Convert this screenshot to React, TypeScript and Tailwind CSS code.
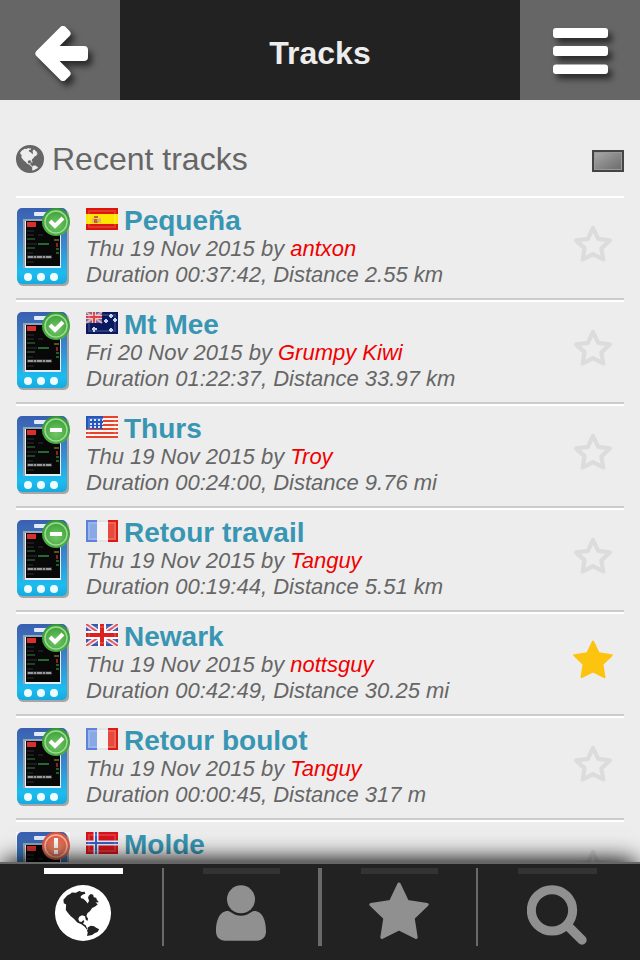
import React from 'react';

type Status = 'done' | 'minus' | 'alert';
type Country = 'es' | 'au' | 'us' | 'fr' | 'gb' | 'no';

interface Track {
  name: string;
  country: Country;
  date: string;
  author: string;
  duration: string;
  distance: string;
  status: Status;
  starred?: boolean;
}

const tracks: Track[] = [
  { name: 'Pequeña', country: 'es', date: 'Thu 19 Nov 2015', author: 'antxon', duration: '00:37:42', distance: '2.55 km', status: 'done' },
  { name: 'Mt Mee', country: 'au', date: 'Fri 20 Nov 2015', author: 'Grumpy Kiwi', duration: '01:22:37', distance: '33.97 km', status: 'done' },
  { name: 'Thurs', country: 'us', date: 'Thu 19 Nov 2015', author: 'Troy', duration: '00:24:00', distance: '9.76 mi', status: 'minus' },
  { name: 'Retour travail', country: 'fr', date: 'Thu 19 Nov 2015', author: 'Tanguy', duration: '00:19:44', distance: '5.51 km', status: 'minus' },
  { name: 'Newark', country: 'gb', date: 'Thu 19 Nov 2015', author: 'nottsguy', duration: '00:42:49', distance: '30.25 mi', status: 'done', starred: true },
  { name: 'Retour boulot', country: 'fr', date: 'Thu 19 Nov 2015', author: 'Tanguy', duration: '00:00:45', distance: '317 m', status: 'done' },
  { name: 'Molde', country: 'no', date: '', author: '', duration: '', distance: '', status: 'alert' },
];

function Globe({ className }: { className: string }) {
  return (
    <svg viewBox="0 0 166 166" className={className} fill="currentColor" fillRule="evenodd" aria-hidden="true">
      <path d="M83 0a83 83 0 1 0 0 166a83 83 0 1 0 0-166zM25 44L36 31 46 26 50 22 62 23 72 18 80 21 88 20 90 26 83 28 76 33 77 39 84 41 92 48 97 55 101 47 98 38 100 32 106 27 113 29 115 36 122 38 124 44 130 51 120 52 127 57 119 64 110 68 104 77 96 84 93 92 98 100 96 107 91 102 89 93 80 90 72 94 69 101 72 108 79 110 84 104 87 108 83 115 91 119 94 127 98 128 96 134 88 124 78 116 66 111 56 100 46 92 38 82 32 74 33 58 26 54zM98 125L106 121 116 122 122 127 131 131 126 139 117 143 110 148 95 151 97 141 94 133z" />
    </svg>
  );
}

function Star({ className, filled = true }: { className: string; filled?: boolean }) {
  return (
    <svg viewBox="0 0 180 172" className={className} aria-hidden="true">
      {filled ? (
        <path d="M90 6L115 58 174 67 132 107 141 165 90 139 39 165 48 107 6 67 65 58z" fill="currentColor" stroke="currentColor" strokeWidth="10" strokeLinejoin="round" />
      ) : (
        <path d="M90 16L113 65 166 72 128 108 136 158 90 134 44 158 52 108 14 72 67 65z" fill="none" stroke="currentColor" strokeWidth="19" strokeLinejoin="round" />
      )}
    </svg>
  );
}

function Flag({ country }: { country: Country }) {
  return (
    <svg viewBox="0 0 32 22" className="h-[22px] w-8 shrink-0" role="img" aria-label={country}>
      {country === 'es' && (
        <>
          <rect width="32" height="22" fill="#dd1508" />
          <rect y="6" width="32" height="10" fill="#ffe400" />
          <path d="M6 10h2v5H6zM13 10h2v5h-2z" fill="#e5b46a" />
          <path d="M8 8h4v2H8zM8 11h4v4H8z" fill="#cf5a3a" />
          <path d="M11 11h2v3h-2z" fill="#b3a9b0" />
        </>
      )}
      {country === 'au' && (
        <>
          <rect width="32" height="22" fill="#0a1860" />
          <path d="M0 0h16v11H0z" fill="#6a6aa8" />
          <path d="M0 0L16 11M16 0L0 11" stroke="#e8a5a5" strokeWidth="2" />
          <path d="M8 0v11M0 5h16" stroke="#f0c5c5" strokeWidth="4" />
          <path d="M8 0v11M0 5h16" stroke="#d84343" strokeWidth="2" />
          <path d="M6 17h5M8 15v5M23 4h4M25 2v4M18 9h4M20 7v4M27 8h4M29 6v4M23 18h4M25 16v4" stroke="#c2d0ee" strokeWidth="2" />
        </>
      )}
      {country === 'us' && (
        <>
          <rect width="32" height="22" fill="#fff4ee" />
          <path d="M0 1h32M0 5h32M0 9h32M0 13h32M0 17h32M0 21h32" stroke="#e5432e" strokeWidth="2" />
          <rect width="17" height="13" fill="#2457bd" />
          <path d="M4 4h13M4 8h13M4 11h13" stroke="#d5e4fc" strokeWidth="2" strokeDasharray="2 2" />
        </>
      )}
      {country === 'fr' && (
        <>
          <rect width="32" height="22" fill="#e4e4e6" />
          <rect x="11" y="2" width="11" height="18" fill="#f3f3f3" />
          <rect width="11" height="22" fill="#5b83d8" />
          <rect x="2" y="2" width="9" height="18" fill="#88a8e6" />
          <rect x="22" width="10" height="22" fill="#dd1a12" />
          <rect x="22" y="2" width="8" height="18" fill="#e8493f" />
        </>
      )}
      {country === 'gb' && (
        <>
          <rect width="32" height="22" fill="#3a56ae" />
          <path d="M0 0L32 22M32 0L0 22" stroke="#f5eef2" strokeWidth="5" />
          <path d="M0 0L32 22M32 0L0 22" stroke="#e2525a" strokeWidth="2" />
          <path d="M16 0v22M0 11h32" stroke="#fff" strokeWidth="8" />
          <path d="M16 0v22M0 11h32" stroke="#dc2020" strokeWidth="4" />
        </>
      )}
      {country === 'no' && (
        <>
          <rect width="32" height="22" fill="#d8141a" />
          <path d="M10 0v22M0 11h32" stroke="#e6edfb" strokeWidth="5" />
          <path d="M10 0v22M0 11h32" stroke="#3761c4" strokeWidth="2" />
        </>
      )}
      <rect x="3" y="3" width="26" height="16" fill="none" stroke="#fff" strokeOpacity="0.15" strokeWidth="2" />
    </svg>
  );
}

function Phone({ status }: { status: Status }) {
  const alert = status === 'alert';
  return (
    <svg viewBox="0 0 54 78" className="h-[78px] w-[54px] shrink-0" role="img" aria-label={status}>
      <defs>
        <linearGradient id={'body-' + status} x1="0" y1="0" x2="0" y2="1">
          <stop offset="0" stopColor="#3a5fb0" />
          <stop offset="0.45" stopColor="#3a86cc" />
          <stop offset="0.85" stopColor="#1cbcf0" />
          <stop offset="1" stopColor="#16aae0" />
        </linearGradient>
        <radialGradient id={'badge-' + status} cx="0.5" cy="0.6" r="0.6">
          <stop offset="0" stopColor={alert ? '#f0906f' : '#74c86a'} />
          <stop offset="1" stopColor={alert ? '#dc4f3d' : '#319a2d'} />
        </radialGradient>
      </defs>
      {alert && <rect width="54" height="78" fill="#f8f8f8" />}
      <rect x="2" y="2" width="51" height="76" rx="5" fill="#777" fillOpacity="0.6" />
      <rect x="1" y="0" width="50" height="76" rx="5" fill={'url(#body-' + status + ')'} />
      <rect x="18" y="4" width="17" height="4" rx="1" fill="#dfeafa" />
      <rect x="7" y="11" width="38" height="49" fill="#9aa4b0" />
      <rect x="9" y="13" width="36" height="47" fill="#e4ecf4" />
      <rect x="10" y="13" width="34" height="45" fill="#080808" />
      <rect x="11" y="14" width="9" height="5" fill="#d83030" />
      <path d="M11 23h7M11 27h7M22 27h5M11 36h10M11 45h6" stroke="#303038" strokeWidth="1" />
      <path d="M11 31h8M11 40h8" stroke="#1d4423" strokeWidth="2" />
      <path d="M22 36h11" stroke="#266a33" strokeWidth="2" />
      <path d="M11 49h25" stroke="#444" strokeWidth="3" />
      <path d="M12 49h23" stroke="#999" strokeWidth="2" strokeDasharray="5 1 2 1" />
      <path d="M11 54h7" stroke="#303030" strokeWidth="1" />
      <path d="M38 32h5" stroke="#5e5020" strokeWidth="2" />
      <path d="M41 35v4" stroke="#8a2424" strokeWidth="2" />
      <path d="M40 41h3M40 45h3" stroke="#1b6428" strokeWidth="2" />
      <g fill="#effcff">
        <circle cx="12" cy="69" r="4" />
        <circle cx="25" cy="69" r="4" />
        <circle cx="38" cy="69" r="4" />
      </g>
      <circle cx="40" cy="14" r="14" fill={'url(#badge-' + status + ')'} />
      <circle cx="40" cy="14" r="11" fill="none" stroke={alert ? '#f7b8a0' : '#9fda94'} strokeWidth="1.5" />
      {status === 'done' && <path d="M34 13l5 5 8-8" fill="none" stroke="#fff" strokeWidth="4" />}
      {status === 'minus' && <path d="M34 14h12" stroke="#fff" strokeWidth="4" />}
      {alert && <path d="M40 6v10M40 18v4" stroke="#fff" strokeWidth="4" />}
    </svg>
  );
}

function TrackRow({ track }: { track: Track }) {
  return (
    <li className="flex h-[104px] items-start border-t-2 border-b-2 border-t-white border-b-[#ccc] pt-[10px]">
      <Phone status={track.status} />
      <div className="ml-4 min-w-0 flex-1 whitespace-nowrap text-[22px] leading-[26px] text-[#666]">
        <h2 className="flex h-[26px] items-start gap-[6px] text-[28px] font-bold text-[#3896b3]">
          <Flag country={track.country} />
          <a href="#track">{track.name}</a>
        </h2>
        {track.author && (
          <>
            <p className="mt-[2px] italic">
              {track.date} by <a href="#author" className="text-[#f00000]">{track.author}</a>
            </p>
            <p className="italic">
              Duration {track.duration}, Distance {track.distance}
            </p>
          </>
        )}
      </div>
      <button
        type="button"
        aria-label={'Favourite ' + track.name}
        aria-pressed={!!track.starred}
        className={'mt-4 mr-[11px] shrink-0 ' + (track.starred ? 'text-[#fcc30f]' : 'text-[#dcdcdc]')}
      >
        <Star className="h-[39px] w-10" filled={!!track.starred} />
      </button>
    </li>
  );
}

function Tab({ label, active = false, edge, children }: { label: string; active?: boolean; edge: string; children: React.ReactNode }) {
  return (
    <button
      type="button"
      aria-label={label}
      className={'flex h-[78px] flex-col items-center border-[#6a6a6a] ' + edge + ' ' + (active ? 'text-white' : 'text-[#909090]')}
    >
      <span className={'h-[6px] w-1/2 shrink-0 ' + (active ? 'bg-white' : 'bg-[#333]')} />
      {children}
    </button>
  );
}

export default function App() {
  return (
    <div className="flex h-screen flex-col overflow-hidden bg-[#ededed] font-['Liberation_Sans',Arial,sans-serif]">
      <header className="flex h-[100px] shrink-0 bg-[#222]">
        <button type="button" aria-label="Back" className="flex w-[120px] items-center justify-center bg-[#666]">
          <svg viewBox="0 0 120 100" className="h-[100px] w-[120px] drop-shadow-[4px_5px_3px_rgba(0,0,0,0.6)]" aria-hidden="true">
            <path d="M39.500 53.500L63 30L66.500 33.500L50 50H84V57H50L66.500 73.500L63 77z" fill="#fff" stroke="#fff" strokeWidth="8" strokeLinejoin="round" />
          </svg>
        </button>
        <h1 className="flex flex-1 items-center justify-center pt-[6px] text-[32px] font-bold text-[#ededed]">Tracks</h1>
        <button type="button" aria-label="Menu" className="flex w-[120px] items-center justify-center bg-[#666]">
          <svg viewBox="0 0 120 100" className="h-[100px] w-[120px] drop-shadow-[4px_5px_3px_rgba(0,0,0,0.6)]" fill="#fff" aria-hidden="true">
            <rect x="33" y="28" width="55" height="10" rx="3" />
            <rect x="33" y="46" width="55" height="10" rx="3" />
            <rect x="33" y="64.500" width="55" height="9.500" rx="3" />
          </svg>
        </button>
      </header>

      <main className="min-h-0 flex-1 overflow-hidden px-4">
        <div className="flex h-24 items-center justify-between pt-[22px] text-[#666]">
          <h2 className="flex items-center gap-2 text-[32px]">
            <Globe className="h-7 w-7" />
            Recent tracks
          </h2>
          <button type="button" aria-label="Filter by country" className="mt-1 h-[22px] w-8 border-2 border-[#444] bg-linear-to-br from-[#aaa] to-[#6a6a6a] p-0">
            <span className="block h-full w-full border border-[#999]" />
          </button>
        </div>
        <ul>
          {tracks.map((track) => (
            <TrackRow key={track.name} track={track} />
          ))}
        </ul>
      </main>

      <nav className="relative grid h-[98px] shrink-0 grid-cols-4 border-t-2 border-[#666] bg-[#222] px-1 pt-1 shadow-[0_-6px_24px_-6px_#000,0_-2px_20px_-4px_rgba(0,0,0,0.4)]">
        <Tab label="All tracks" active edge="border-0">
          <Globe className="mt-[11px] h-[56px] w-[56px]" />
        </Tab>
        <Tab label="My tracks" edge="border-x-2">
          <svg viewBox="0 0 150 166" className="mt-[11px] h-[56px] w-[50px]" fill="currentColor" aria-hidden="true">
            <circle cx="75" cy="42" r="42" />
            <path d="M36 77C9 77 0 108 0 138C0 155 10 166 28 166H122C140 166 150 155 150 138C150 108 141 77 114 77C106 77 98 91 75 91C52 91 44 77 36 77z" />
          </svg>
        </Tab>
        <Tab label="Favourites" edge="border-x-2">
          <Star className="mt-2 h-[58px] w-[60px]" />
        </Tab>
        <Tab label="Search" edge="border-0">
          <svg viewBox="0 0 180 180" className="mt-[11px] h-[60px] w-[60px]" fill="none" stroke="currentColor" aria-hidden="true">
            <circle cx="75" cy="76" r="62" strokeWidth="27" />
            <path d="M124 124L165 165" strokeWidth="28" strokeLinecap="round" />
          </svg>
        </Tab>
      </nav>
    </div>
  );
}
